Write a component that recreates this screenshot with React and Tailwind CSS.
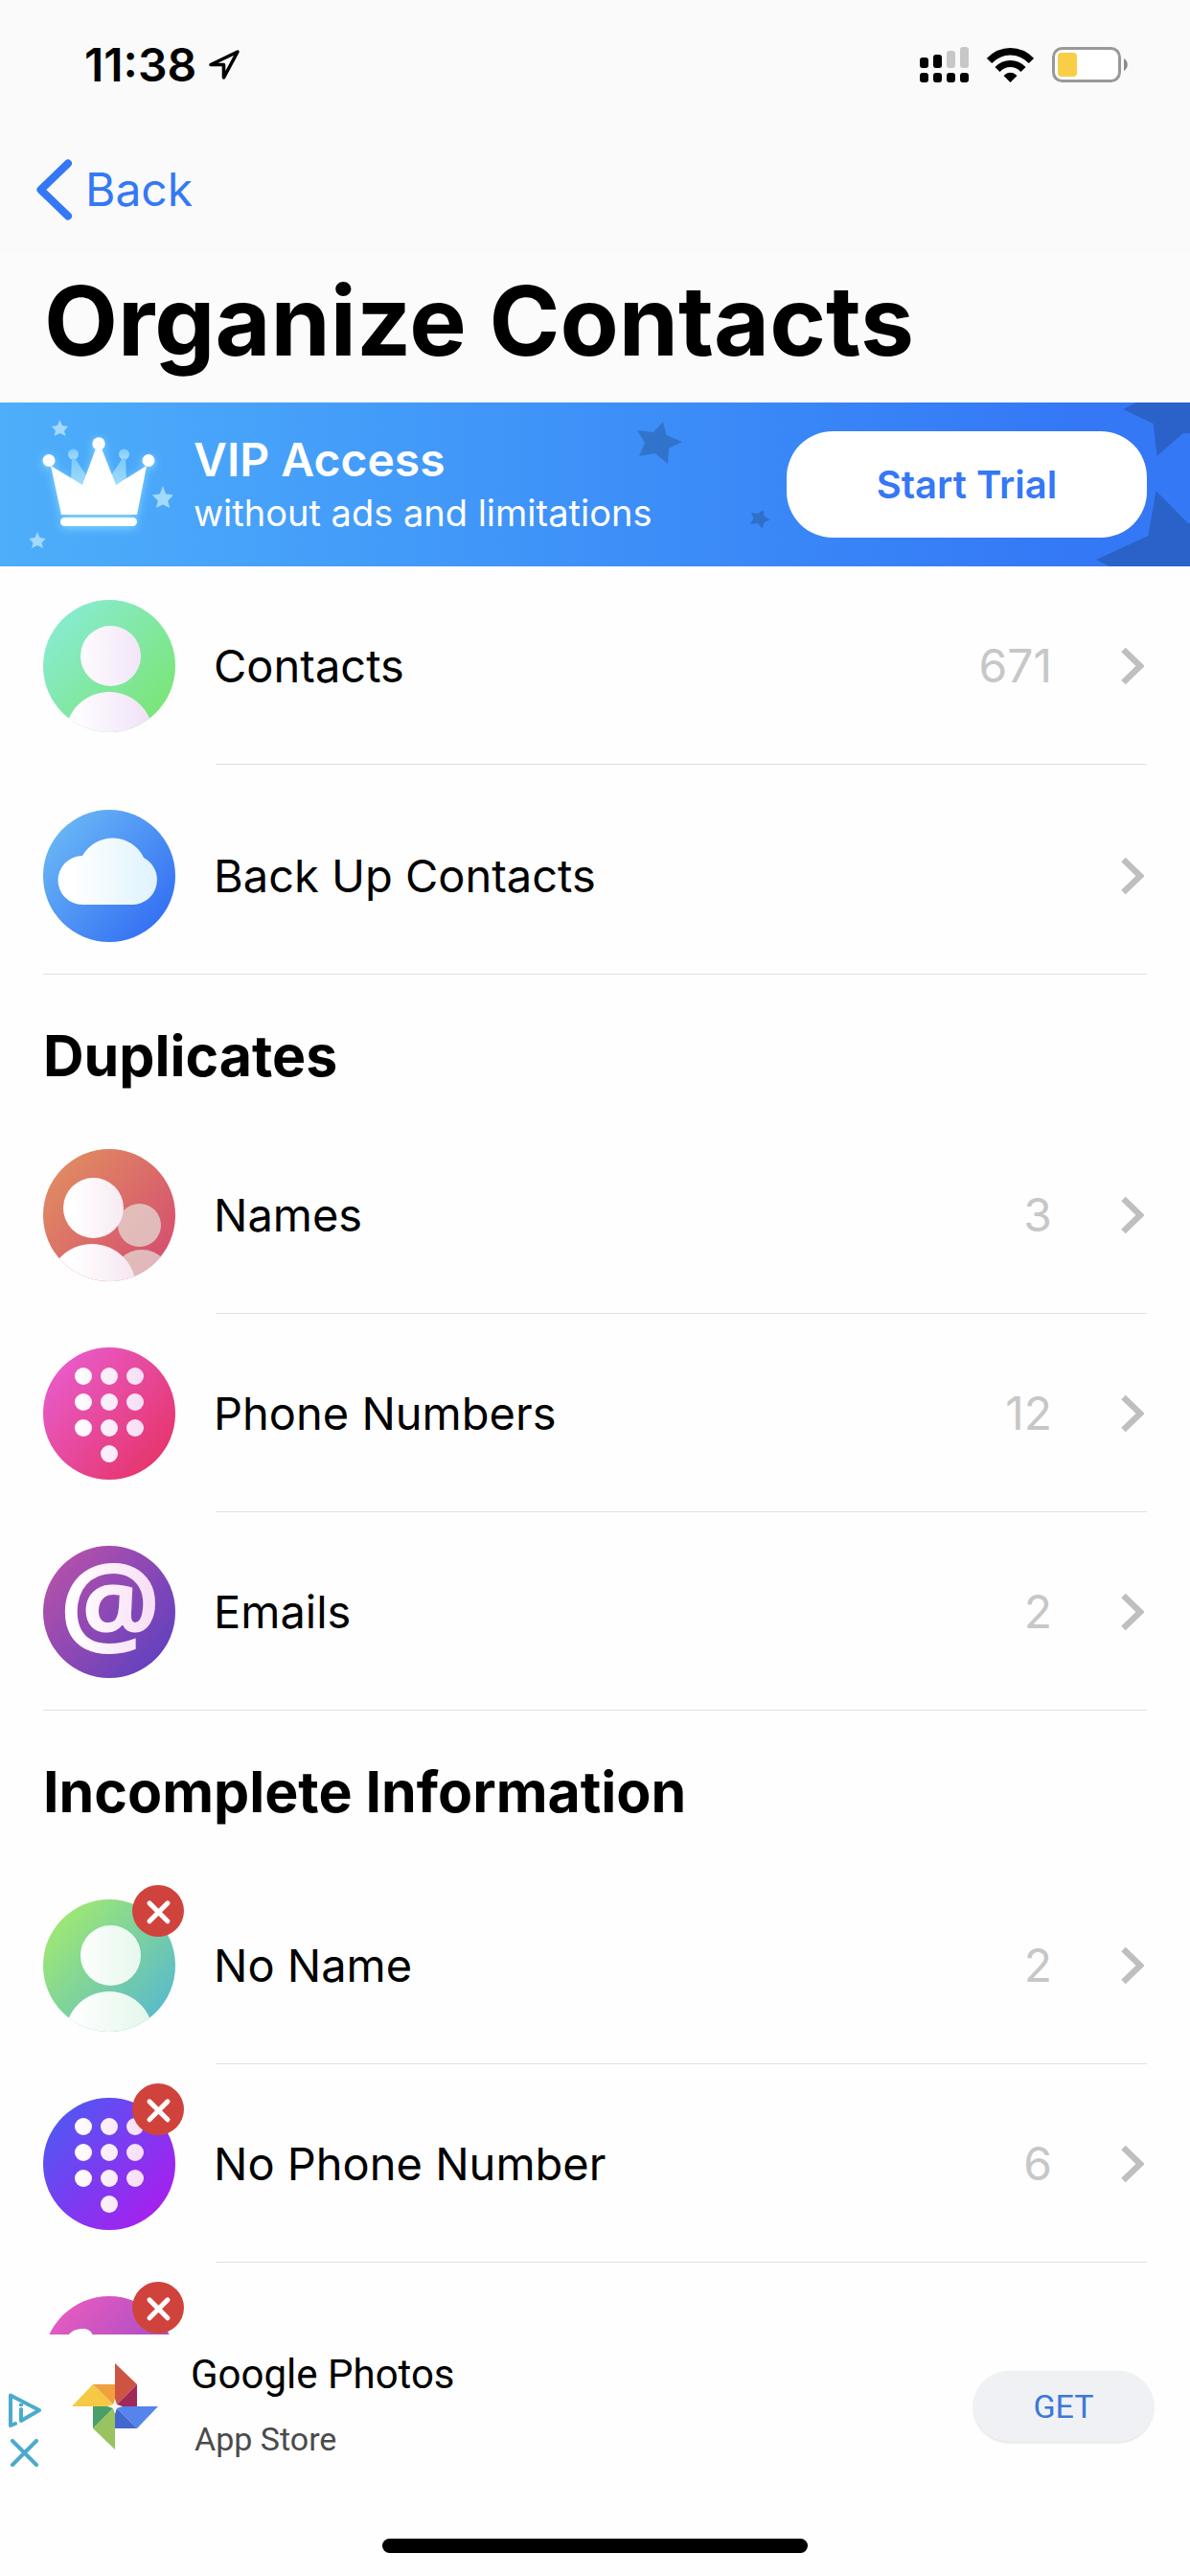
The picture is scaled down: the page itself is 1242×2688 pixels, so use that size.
import React from "react"

const StatusBar = () => (
  <div className="flex items-center justify-between pl-[88px] pr-16 h-[136px]">
    <div className="flex items-center gap-3">
      <span className="text-[48px] leading-none font-semibold">11:38</span>
      <svg viewBox="0 0 34 34" className="w-[34px] h-[34px]" fill="none">
        <path
          d="M31 3 3 16.500H16.500V30Z"
          stroke="black"
          strokeWidth="3.600"
          strokeLinejoin="round"
        />
      </svg>
    </div>
    <div className="flex items-center gap-[19px]">
      <svg viewBox="0 0 51 38" className="w-[51px] h-[38px]">
        <rect x="0" y="11" width="9" height="11" rx="3" />
        <rect x="14" y="8" width="9" height="14" rx="3" />
        <rect x="28" y="4" width="9" height="18" rx="3" fill="#c7c7c7" />
        <rect x="42" y="0" width="9" height="22" rx="3" fill="#c7c7c7" />
        {[0, 14, 28, 42].map(x => (
          <rect key={x} x={x} y="27" width="9" height="10" rx="3" />
        ))}
      </svg>
      <svg viewBox="0 0 49 36" className="w-[49px] h-9" fill="none">
        <path d="M2.500 13.500C15 0.500 34 0.500 46.500 13.500" stroke="black" strokeWidth="7.500" />
        <path d="M11 22.500C18.500 14.500 30.500 14.500 38 22.500" stroke="black" strokeWidth="7" />
        <path d="M17.500 29C21.500 24.500 27.500 24.500 31.500 29L24.500 36Z" fill="black" />
      </svg>
      <svg viewBox="0 0 80 38" className="w-20 h-[38px]">
        <rect
          x="1.500"
          y="1.500"
          width="69"
          height="34"
          rx="9"
          fill="white"
          stroke="#999"
          strokeWidth="3"
        />
        <rect x="6" y="6" width="20" height="25" rx="4" fill="#f7ce46" />
        <path d="M75 12c5 2.500 5 10.500 0 13Z" fill="#8a8a8a" />
      </svg>
    </div>
  </div>
)

const Crown = () => (
  <svg viewBox="0 0 180 171" className="w-[180px] h-[171px] shrink-0">
    <defs>
      <filter id="glow" x="-30%" y="-30%" width="160%" height="160%">
        <feDropShadow dx="0" dy="2" stdDeviation="5" floodColor="#8fe0ff" floodOpacity="0.8" />
      </filter>
      <linearGradient id="crownBack" x1="0" y1="0" x2="0" y2="1">
        <stop offset="0" stopColor="#7ccbfa" />
        <stop offset="1" stopColor="#a5dcfc" />
      </linearGradient>
    </defs>
    <g fill="#a3d9fc">
      <path d="M62.500 18l2.500 6 6 1-4 4.500 1.500 5.500-6-3-6 3 1.500-5.500-4-4.500 6-1Z" />
      <path d="M170 87l3.200 8.500 8 1-6 6 2 7.500-7.200-3.500-7.200 3.500 2-7.500-6-6 8-1Z" />
      <path d="M39 135l2.500 6 6 1-4 4.500 1.500 5.500-6-3-6 3 1.500-5.500-4-4.500 6-1Z" />
    </g>
    <g fill="url(#crownBack)">
      <circle cx="76.500" cy="54" r="5.500" />
      <circle cx="129.500" cy="54" r="5.500" />
      <path d="M75 58h3l12 18-4 14-12-8ZM128 58h3l1 24-11 8-5-14Z" />
    </g>
    <g fill="white" filter="url(#glow)">
      <circle cx="51" cy="60.500" r="6.500" />
      <circle cx="103" cy="43" r="6.700" />
      <circle cx="155" cy="60.500" r="6.500" />
      <path d="M53 66 86 86 100 48h6l15 38 32-20-10 51H64Z" />
      <rect x="63" y="120" width="80" height="9" rx="4.500" />
    </g>
  </svg>
)

const Banner = () => (
  <section className="relative flex items-center h-[171px] pr-[45px] bg-linear-to-r from-[#4eaefa] to-[#3478f6] to-90% overflow-hidden">
    {/* decorative stars behind the button */}
    <svg
      viewBox="642 0 600 171"
      className="absolute right-0 top-0 w-[600px] h-[171px]"
      fill="black"
      fillOpacity="0.180"
    >
      <path d="M692 20 695.500 34 712 41 698 48 697 64 683.500 53 667 56 673 42 665 29 682 31Z" />
      <path d="M796.500 112 797.600 118.700 804 122.500 797.600 125 795.600 132 791 126 783 127 786.500 121 784 115 791 116Z" />
      <path d="M1186 0 1172 7 1203.600 22 1207.500 56 1235 32 1242 32.300V0Z" />
      <path d="M1206.500 92 1198.400 139 1144 164 1158 171H1242V126H1240Z" />
    </svg>
    <Crown />
    <div className="relative flex-1 pl-[22px] text-white">
      <h2 className="text-[48px] leading-[58px] font-semibold">VIP Access</h2>
      <p className="text-[38px] leading-[52px]">without ads and limitations</p>
    </div>
    <button
      type="button"
      className="relative w-[376px] h-[111px] rounded-[48px] bg-white text-[#3478f6] text-[40px] font-semibold"
    >
      Start Trial
    </button>
  </section>
)

const Disc = ({ id, from, to, tint = "#f1e2f8", children }) => (
  <svg viewBox="0 0 138 138" className="w-[138px] h-[138px] overflow-visible">
    <defs>
      <linearGradient id={`${id}-bg`} x1="0.100" y1="0.150" x2="0.900" y2="0.850">
        <stop offset="0" stopColor={from} />
        <stop offset="1" stopColor={to} />
      </linearGradient>
      <linearGradient
        id={`${id}-fg`}
        gradientUnits="userSpaceOnUse"
        x1="30"
        y1="0"
        x2="110"
        y2="0"
      >
        <stop offset="0" stopColor="white" />
        <stop offset="1" stopColor={tint} />
      </linearGradient>
      <clipPath id={`${id}-clip`}>
        <circle cx="69" cy="69" r="69" />
      </clipPath>
    </defs>
    <circle cx="69" cy="69" r="69" fill={`url(#${id}-bg)`} />
    <g clipPath={`url(#${id}-clip)`} fill={`url(#${id}-fg)`}>
      {children}
    </g>
  </svg>
)

const Person = () => (
  <>
    <circle cx="70.500" cy="58.500" r="31.500" />
    <circle cx="69" cy="142" r="46" />
  </>
)

const People = () => (
  <>
    <g fill="#e5e3dc" fillOpacity="0.700">
      <circle cx="100.500" cy="79.500" r="22.500" />
      <circle cx="103" cy="137" r="32" />
    </g>
    <circle cx="52.500" cy="61.500" r="31.500" />
    <circle cx="51" cy="145" r="46" />
  </>
)

const Cloud = () => (
  <path d="M41 99a25.500 25.500 0 0 1 0-51A36 36 0 0 1 105 50A26 26 0 0 1 94 99Z" />
)

const Keypad = () => (
  <>
    {[30, 57, 84].map(y =>
      [42, 69, 96].map(x => <circle key={`${x}-${y}`} cx={x} cy={y} r="9" />)
    )}
    <circle cx="69" cy="111" r="9" />
  </>
)

const At = () => (
  <text
    x="70"
    y="103"
    textAnchor="middle"
    className="font-['Open_Sans',sans-serif] font-bold text-[118px]"
  >
    @
  </text>
)

const Handset = () => (
  <path d="M24 48C25 37 34 34 42 34C48 34 52 38 52 43C52 60 70 84 92 92L84 108C52 102 24 78 24 48Z" />
)

const Row = ({ icon, label, count, missing, divider = "inset" }) => (
  <li className="px-[45px]">
    <a href="#" className="flex items-center h-[206px] pt-0.5">
      <span className="relative shrink-0">
        {icon}
        {missing && (
          <span className="absolute -top-[15px] -right-[9px] w-[54px] h-[54px] rounded-full bg-[#d0433c] text-white">
            <svg viewBox="0 0 30 30" className="w-[54px] h-[54px]">
              <g stroke="currentColor" strokeWidth="2.800" strokeLinecap="round">
                <path d="M10 10.500 20.500 21M20.500 10.500 10 21" />
              </g>
            </svg>
          </span>
        )}
      </span>
      <span className="flex-1 pl-10 text-[47px] leading-[60px]">{label}</span>
      <span className="text-[48px] leading-[60px] text-[#c7c7c7]">{count}</span>
      <svg viewBox="0 0 24 40" className="w-6 h-10 ml-[72px] mr-[3px]" fill="none">
        <path d="M2.500 3 20 20 2.500 37" stroke="#bfbfbf" strokeWidth="6.500" />
      </svg>
    </a>
    <div className={`h-px bg-[#e0e0e0] ${divider === "inset" ? "ml-[180px]" : ""}`} />
  </li>
)

const SectionTitle = ({ children }) => (
  <h2 className="px-[45px] pt-[49px] pb-[26px] text-[59px] leading-[72px] font-bold">
    {children}
  </h2>
)

const PhotosLogo = () => (
  <svg viewBox="0 0 90 90" className="w-[90px] h-[90px]">
    <path d="M45 0 68 22 45 45Z" fill="#cd5441" />
    <path d="M68 22V45H45Z" fill="#a0295c" />
    <path d="M90 45 68 68 45 45Z" fill="#5484ec" />
    <path d="M68 68H45V45Z" fill="#4267cf" />
    <path d="M45 90 22 68 45 45Z" fill="#9ac25f" />
    <path d="M22 68V45H45Z" fill="#4a9f68" />
    <path d="M0 45 22 22 45 45Z" fill="#f6c945" />
    <path d="M22 22H45V45Z" fill="#f0a13d" />
    <path d="M45 37 47 43 53 45 47 47 45 53 43 47 37 45 43 43Z" fill="#f7f7f7" />
  </svg>
)

const AdBar = () => (
  <aside className="flex items-center h-[150px] pl-2 pr-[38px] font-[Roboto,sans-serif]">
    <div className="flex flex-col gap-3 pt-[50px]">
      <a href="#" aria-label="About this ad">
        <svg viewBox="0 0 36 36" className="w-9 h-9" fill="none" stroke="#4cabcc">
          <path
            d="M8 32 3 34V2.500L33 18 14 29V17"
            strokeWidth="4"
            strokeLinejoin="round"
            strokeLinecap="round"
          />
          <path d="M14 11V14" strokeWidth="4" />
        </svg>
      </a>
      <button type="button" aria-label="Close ad">
        <svg viewBox="0 0 36 30" className="w-9 h-[30px]" stroke="#4cabcc">
          <path d="M5 2 30 27M30 2 5 27" strokeWidth="4" strokeLinecap="round" />
        </svg>
      </button>
    </div>
    <div className="pl-[31px]">
      <PhotosLogo />
    </div>
    <div className="flex-1 pl-[34px]">
      <p className="text-[42px] leading-[46px] text-black">Google Photos</p>
      <p className="pt-6 pl-1 pb-0.5 text-[34px] leading-10 text-[#4a4a4a]">App Store</p>
    </div>
    <button
      type="button"
      className="w-[188px] h-[74px] rounded-full bg-[#eff1f5] text-[#3b78d8] text-[34px] shadow-sm"
    >
      GET
    </button>
  </aside>
)

export default function App() {
  return (
    <div className="h-screen flex flex-col bg-[#fefefe] text-black font-[Inter,sans-serif] overflow-hidden">
      <header className="bg-[#fafafa]">
        <StatusBar />
        <nav className="flex items-center h-32 pl-[37px] pb-1">
          <a href="#" className="flex items-center gap-[14px] text-[#3478f6]">
            <svg viewBox="0 0 38 64" className="w-[38px] h-16" fill="none">
              <path
                d="M34 4.500 5.500 32 34 59.500"
                stroke="currentColor"
                strokeWidth="8"
                strokeLinecap="round"
                strokeLinejoin="round"
              />
            </svg>
            <span className="text-[48px] leading-[60px]">Back</span>
          </a>
        </nav>
        <div className="h-[156px] bg-[#fbfbfb] px-[46px] pt-[11px]">
          <h1 className="text-[100px] leading-[120px] font-bold">Organize Contacts</h1>
        </div>
      </header>

      <Banner />

      <main className="flex-1 min-h-0 overflow-hidden">
        <ul>
          <Row
            icon={
              <Disc id="contacts" from="#88ebd0" to="#7be577">
                <Person />
              </Disc>
            }
            label="Contacts"
            count={671}
          />
          <li className="h-3" aria-hidden="true" />
          <Row
            icon={
              <Disc id="backup" from="#68b5f6" to="#3470f3" tint="#e1f4fd">
                <Cloud />
              </Disc>
            }
            label="Back Up Contacts"
            divider="full"
          />
        </ul>

        <SectionTitle>Duplicates</SectionTitle>
        <ul>
          <Row
            icon={
              <Disc id="names" from="#e08a62" to="#d5506f" tint="#f4e0ee">
                <People />
              </Disc>
            }
            label="Names"
            count={3}
          />
          <Row
            icon={
              <Disc id="phones" from="#e85bc8" to="#e6356c" tint="#f6dcf4">
                <Keypad />
              </Disc>
            }
            label="Phone Numbers"
            count={12}
          />
          <Row
            icon={
              <Disc id="emails" from="#b350ab" to="#6341be" tint="#f8e0f6">
                <At />
              </Disc>
            }
            label="Emails"
            count={2}
            divider="full"
          />
        </ul>

        <SectionTitle>Incomplete Information</SectionTitle>
        <ul className="pt-[15px]">
          <Row
            icon={
              <Disc id="no-name" from="#9fe873" to="#5abbca" tint="#e4f7eb">
                <Person />
              </Disc>
            }
            label="No Name"
            count={2}
            missing
          />
          <Row
            icon={
              <Disc id="no-phone" from="#5356f3" to="#a620ee" tint="#f6dcf4">
                <Keypad />
              </Disc>
            }
            label="No Phone Number"
            count={6}
            missing
          />
          <Row
            icon={
              <Disc id="no-call" from="#e45bc0" to="#9248c6" tint="#f6e6fb">
                <Handset />
              </Disc>
            }
            missing
          />
        </ul>
      </main>

      <footer className="bg-[#fefefe]">
        <AdBar />
        <div className="flex justify-center h-[102px] pt-[63px]">
          <div className="w-[444px] h-[15px] rounded-full bg-black" />
        </div>
      </footer>
    </div>
  )
}
